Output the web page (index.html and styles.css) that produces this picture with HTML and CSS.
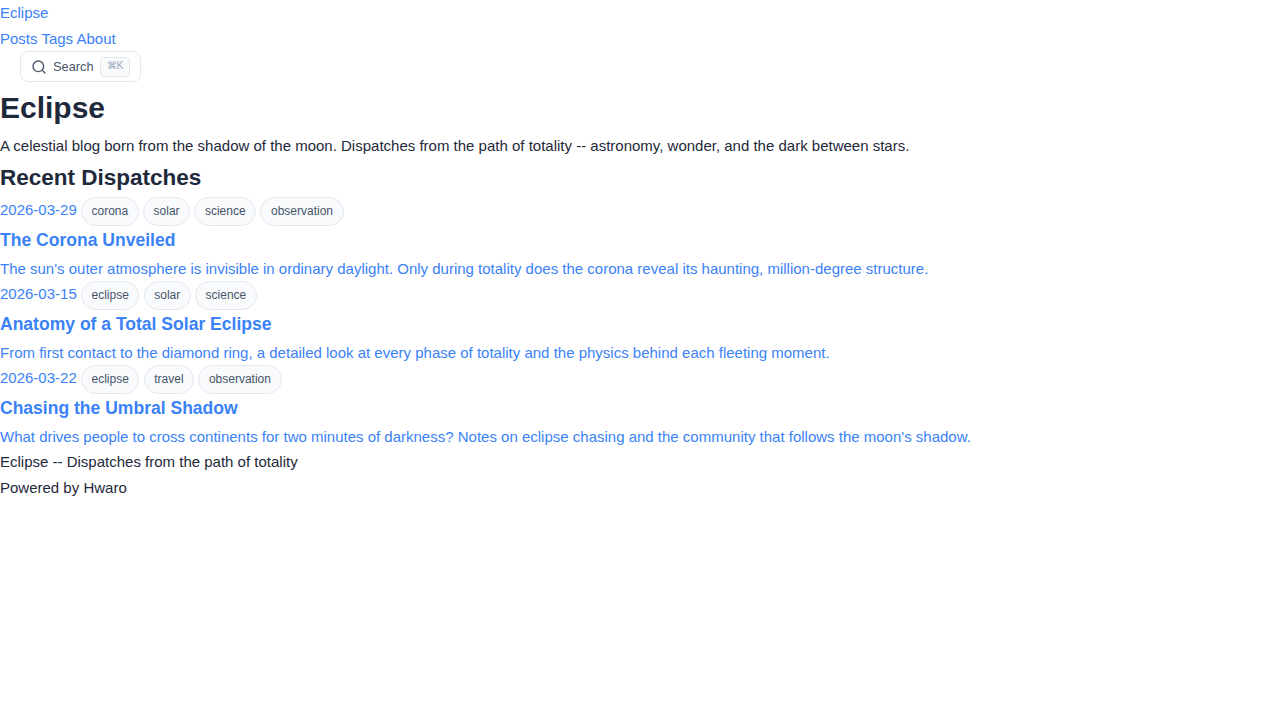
FILE: index.html
```html
<!DOCTYPE html>
<html lang="en">
<head>
  <meta charset="UTF-8" />
  <title>Eclipse</title>
  <link rel="stylesheet" href="styles.css">
</head>
<body>
  <header>
    <div><a href="#">Eclipse</a></div>
    <nav>
      <a href="#">Posts</a>
      <a href="#">Tags</a>
      <a href="#">About</a>
    </nav>
    <button class="search-btn">
      <svg class="search-icon" width="16" height="16" viewBox="0 0 24 24" fill="none" stroke="currentColor" stroke-width="2" stroke-linecap="round" stroke-linejoin="round">
        <circle cx="11" cy="11" r="8"></circle>
        <path d="m21 21-4.3-4.3"></path>
      </svg>
      <span>Search</span>
      <kbd>⌘K</kbd>
    </button>
  </header>

  <main>
    <h1>Eclipse</h1>
    <p>A celestial blog born from the shadow of the moon. Dispatches from the path of totality -- astronomy, wonder, and the dark between stars.</p>

    <h2>Recent Dispatches</h2>

    <article>
      <div class="meta">
        <a href="#">2026-03-29</a>
        <span class="tag">corona</span>
        <span class="tag">solar</span>
        <span class="tag">science</span>
        <span class="tag">observation</span>
      </div>
      <a href="#">
        <h3>The Corona Unveiled</h3>
        <p>The sun's outer atmosphere is invisible in ordinary daylight. Only during totality does the corona reveal its haunting, million-degree structure.</p>
      </a>
    </article>

    <article>
      <div class="meta">
        <a href="#">2026-03-15</a>
        <span class="tag">eclipse</span>
        <span class="tag">solar</span>
        <span class="tag">science</span>
      </div>
      <a href="#">
        <h3>Anatomy of a Total Solar Eclipse</h3>
        <p>From first contact to the diamond ring, a detailed look at every phase of totality and the physics behind each fleeting moment.</p>
      </a>
    </article>

    <article>
      <div class="meta">
        <a href="#">2026-03-22</a>
        <span class="tag">eclipse</span>
        <span class="tag">travel</span>
        <span class="tag">observation</span>
      </div>
      <a href="#">
        <h3>Chasing the Umbral Shadow</h3>
        <p>What drives people to cross continents for two minutes of darkness? Notes on eclipse chasing and the community that follows the moon's shadow.</p>
      </a>
    </article>
  </main>

  <footer>
    <p>Eclipse -- Dispatches from the path of totality</p>
    <p>Powered by Hwaro</p>
  </footer>
</body>
</html>
```

FILE: styles.css
```css
* {
  box-sizing: border-box;
}

body {
  margin: 0;
  font-family: "Liberation Sans", Arial, sans-serif;
  font-size: 15px;
  line-height: 26px;
  color: #1e293b;
  background: #fff;
}

a {
  color: #3b82f6;
  text-decoration: none;
}

h1, h2, h3, p {
  margin: 0;
}

h1 {
  font-size: 30px;
  line-height: 50px;
  padding-top: 1px;
  height: 51px;
}

h2 {
  font-size: 22.5px;
  line-height: 38px;
}

h3 {
  font-size: 17.55px;
  line-height: 29px;
}

.search-btn {
  display: inline-flex;
  align-items: center;
  gap: 6px;
  height: 31px;
  margin: -1px 0 0 20px;
  padding: 0 10px;
  font-family: inherit;
  font-size: 12.8px;
  color: #475569;
  background: #fff;
  border: 1px solid #e2e8f0;
  border-radius: 8px;
  vertical-align: top;
}

kbd {
  padding: 0 6px;
  height: 20px;
  font-family: inherit;
  font-size: 10.4px;
  line-height: 16px;
  color: #94a3b8;
  background: #f8fafc;
  border: 1px solid #e2e8f0;
  border-radius: 4px;
}

.meta {
  height: 29px;
}

.tag {
  display: inline-block;
  padding: 4px 9.6px;
  font-size: 12px;
  line-height: 19px;
  color: #475569;
  background: #f8fafc;
  border: 1px solid #e2e8f0;
  border-radius: 999px;
}

article p {
  height: 26px;
  padding-top: 1px;
}
```
